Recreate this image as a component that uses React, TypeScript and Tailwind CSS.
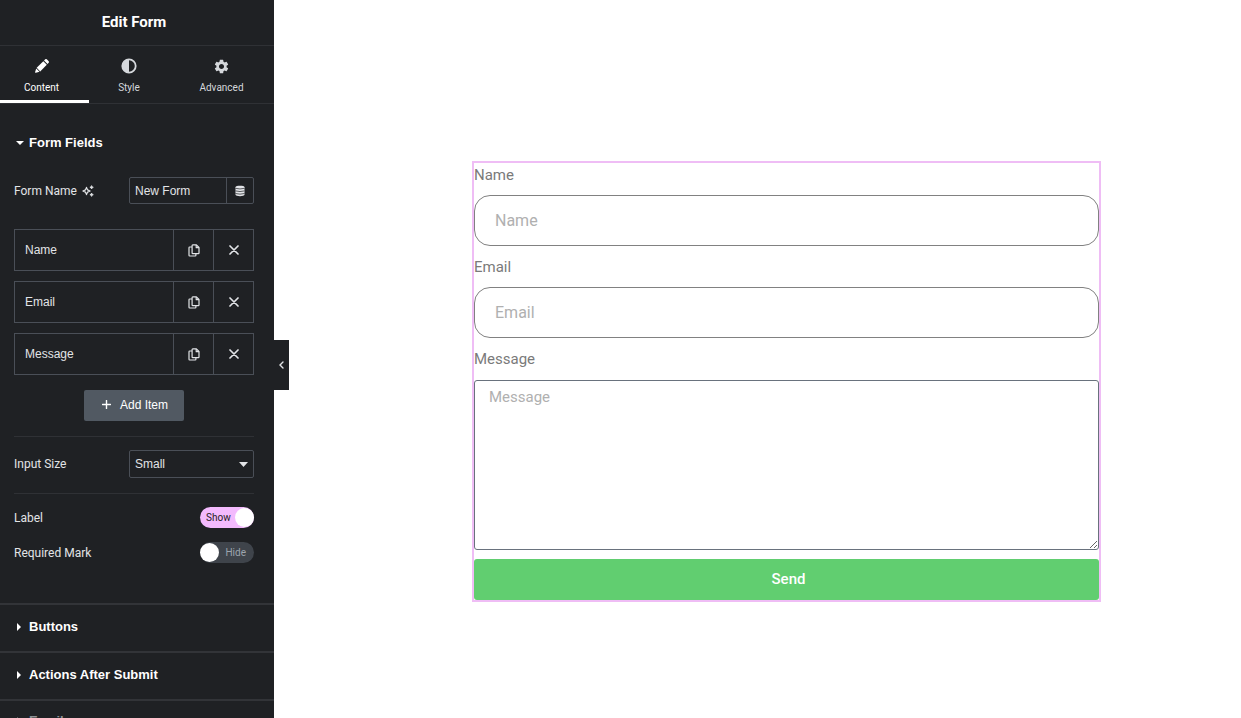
import { useState } from 'react';
import { MdSettings } from 'react-icons/md';
import clsx from 'clsx';

const tabs = [
    { id: 'content', label: 'Content', grow: 'basis-[89px] pr-1.5' },
    { id: 'style', label: 'Style', grow: 'basis-20' },
    { id: 'advanced', label: 'Advanced', grow: 'basis-[105px]' },
];

const fields = ['Name', 'Email', 'Message'];

const PencilIcon = () => (
    <svg width="16" height="16" viewBox="0 0 16 16" fill="currentColor">
        <path d="M9.3 3.2 12.8 6.7 6.2 13.4 2.7 9.8z" />
        <path d="M10 2.5 11.2 1.3Q12 .7 12.8 1.3L14.7 3.2Q15.3 4 14.7 4.8L13.5 6z" />
        <path d="M2.2 10.5 5.5 13.8 1.9 14.8Q.8 15 1.1 14z" />
    </svg>
);

const ContrastIcon = () => (
    <svg width="16" height="16" viewBox="0 0 16 16">
        <circle cx="8" cy="8" r="6.7" fill="none" stroke="currentColor" strokeWidth="1.8" />
        <path d="M8 1.3a6.7 6.7 0 0 0 0 13.4z" fill="currentColor" />
    </svg>
);

const SparkleIcon = () => (
    <svg width="12" height="12" viewBox="0 0 12 12">
        <path d="M4.5 2.4 5.6 4.9 8.1 6 5.6 7.1 4.5 9.6 3.4 7.1.9 6 3.4 4.9z" fill="none" stroke="currentColor" strokeWidth="1.2" strokeLinejoin="round" />
        <path d="M9.6.6 10.1 1.8 11.3 2.3 10.1 2.8 9.6 4 9.1 2.8 7.9 2.3 9.1 1.8zM9.6 8 10.1 9.2 11.3 9.7 10.1 10.2 9.6 11.4 9.1 10.2 7.9 9.7 9.1 9.2z" fill="currentColor" stroke="currentColor" strokeWidth="0.8" />
    </svg>
);

const DatabaseIcon = () => (
    <svg width="10" height="12" viewBox="0 0 10 12">
        <path d="M.5 2.2C.5.3 9.5.3 9.5 2.2V9.8C9.5 11.7.5 11.7.5 9.8z" fill="currentColor" />
        <path d="M.5 3.3Q5 4.6 9.5 3.3M.5 5.9Q5 7.2 9.5 5.9M.5 8.5Q5 9.8 9.5 8.5" fill="none" stroke="#1f2124" strokeWidth="0.7" />
    </svg>
);

const CopyIcon = () => (
    <svg width="12" height="13" viewBox="0 0 12 13" fill="none" stroke="currentColor" strokeWidth="1.2" strokeLinejoin="round">
        <path d="M5 .9H8.4L11 3.5V9Q11 9.7 10.3 9.7H4.8Q4.1 9.7 4.1 9V1.6Q4.1.9 4.8.9z" />
        <path d="M8.2 1V3.7H11" />
        <path d="M4 3H1.7Q1 3 1 3.7V11.3Q1 12 1.7 12H7.2Q7.9 12 7.9 11.3V9.8" />
    </svg>
);

const CloseIcon = () => (
    <svg width="10" height="10" viewBox="0 0 10 10" stroke="currentColor" strokeWidth="1.7" strokeLinecap="round">
        <path d="M1 1 9 9M9 1 1 9" />
    </svg>
);

const tabIcon = (id: string) => {
    if (id === 'content') return <PencilIcon />;
    if (id === 'style') return <ContrastIcon />;
    return <MdSettings size={17} />;
};

interface ToggleProps {
    id: string;
    label: string;
    checked: boolean;
    onChange: (value: boolean) => void;
}

const ToggleRow = ({ id, label, checked, onChange }: ToggleProps) => (
    <div className="flex items-center justify-between">
        <label htmlFor={id}>{label}</label>
        <label
            className={clsx(
                'flex h-[21px] w-[54px] cursor-pointer items-center justify-between rounded-full text-[10px]',
                checked ? 'bg-[#f3bafd] pl-1.5 text-[#1f2124]' : 'flex-row-reverse bg-[#3f444b] pr-2 text-[#9da5ae]'
            )}
        >
            <input id={id} type="checkbox" className="sr-only" checked={checked} onChange={e => onChange(e.target.checked)} />
            <span>{checked ? 'Show' : 'Hide'}</span>
            <span className="size-[19px] rounded-full bg-white" />
        </label>
    </div>
);

const Section = ({ title, className }: { title: string; className?: string }) => (
    <button
        className={clsx('flex h-12 w-full shrink-0 items-center gap-2 border-t-2 border-[#323438] pl-[17px] text-left font-["Liberation_Sans",Arial,sans-serif] text-[13px] font-bold', className)}
    >
        <svg width="4" height="8" viewBox="0 0 4 8" fill="currentColor"><path d="M0 0 4 4 0 8z" /></svg>
        {title}
    </button>
);

const Panel = () => {
    const [activeTab, setActiveTab] = useState('content');
    const [showLabel, setShowLabel] = useState(true);
    const [requiredMark, setRequiredMark] = useState(false);

    return (
        <aside className="relative w-[274px] shrink-0 bg-[#1f2124] text-xs text-[#e2e4e7]">
            <div className="flex h-full flex-col overflow-hidden">
                <header className="flex h-[46px] shrink-0 items-center justify-center border-b border-[#2f3135] pb-0.5 pr-1.5">
                    <h1 className="text-[15px] leading-5 font-bold text-white">Edit Form</h1>
                </header>

                <nav className="flex h-[58px] shrink-0 border-b border-[#2f3135]">
                    {tabs.map(tab => (
                        <button
                            key={tab.id}
                            onClick={() => setActiveTab(tab.id)}
                            className={clsx(
                                'flex grow flex-col items-center border-b-3 pt-3 text-[10px]',
                                tab.grow,
                                activeTab === tab.id ? 'border-white text-white' : 'border-transparent text-[#d5d8dc]'
                            )}
                        >
                            <span className="flex h-4 items-center">{tabIcon(tab.id)}</span>
                            <span className="mt-1.5 leading-4">{tab.label}</span>
                        </button>
                    ))}
                </nav>

                <section className="shrink-0 pr-5 pb-10 pl-3.5">
                    <button className='mt-[27px] flex h-6 items-center gap-[5px] pl-0.5 font-["Liberation_Sans",Arial,sans-serif] text-[13px] font-bold text-white'>
                        <svg width="8" height="4" viewBox="0 0 8 4" fill="currentColor"><path d="M0 0H8L4 4z" /></svg>
                        Form Fields
                    </button>

                    <div className="mt-[22px] flex items-center justify-between">
                        <label htmlFor="form-name" className="flex items-center gap-[5px]">
                            Form Name
                            <SparkleIcon />
                        </label>
                        <div className="flex h-[27px] w-[125px] rounded-xs border border-[#4a4f57]">
                            <input
                                id="form-name"
                                defaultValue="New Form"
                                className='min-w-0 flex-1 bg-transparent pl-[5px] font-["Liberation_Sans",Arial,sans-serif] outline-none'
                            />
                            <button aria-label="Dynamic tags" className="flex w-[27px] items-center justify-center border-l border-[#4a4f57]">
                                <DatabaseIcon />
                            </button>
                        </div>
                    </div>

                    <ul className='mt-[25px] flex flex-col gap-2.5 font-["Liberation_Sans",Arial,sans-serif]'>
                        {fields.map(field => (
                            <li key={field} className="flex h-[42px] border border-[#4a4f57]">
                                <button className="flex-1 pl-2.5 text-left">{field}</button>
                                <button aria-label={`Duplicate ${field}`} className="flex w-10 items-center justify-center border-l border-[#4a4f57]">
                                    <CopyIcon />
                                </button>
                                <button aria-label={`Remove ${field}`} className="flex w-10 items-center justify-center border-l border-[#4a4f57]">
                                    <CloseIcon />
                                </button>
                            </li>
                        ))}
                    </ul>

                    <button className='mx-auto mt-[15px] flex h-[31px] w-[100px] items-center justify-center gap-[9px] rounded-xs bg-[#515962] pb-0.5 pl-0.5 font-["Liberation_Sans",Arial,sans-serif] text-white'>
                        <svg width="9" height="9" viewBox="0 0 9 9" stroke="currentColor" strokeWidth="1.4" strokeLinecap="round"><path d="M4.5.5V8.5M.5 4.5H8.5" /></svg>
                        Add Item
                    </button>

                    <div className="mt-[15px] flex items-center justify-between border-y border-[#2f3135] pt-[13px] pb-[15px]">
                        <label htmlFor="input-size">Input Size</label>
                        <div className="relative">
                            <select
                                id="input-size"
                                defaultValue="Small"
                                className='h-7 w-[125px] appearance-none rounded-xs border border-[#4a4f57] bg-[#1f2124] pl-[5px] font-["Liberation_Sans",Arial,sans-serif] outline-none'
                            >
                                <option>Extra Small</option>
                                <option>Small</option>
                                <option>Medium</option>
                                <option>Large</option>
                            </select>
                            <svg className="pointer-events-none absolute top-3 right-1.5" width="9" height="5" viewBox="0 0 9 5" fill="currentColor"><path d="M0 0H9L4.5 5z" /></svg>
                        </div>
                    </div>

                    <div className="mt-[13px] flex flex-col gap-3.5">
                        <ToggleRow id="show-label" label="Label" checked={showLabel} onChange={setShowLabel} />
                        <ToggleRow id="required-mark" label="Required Mark" checked={requiredMark} onChange={setRequiredMark} />
                    </div>
                </section>

                <Section title="Buttons" className="pb-0.5 text-white" />
                <Section title="Actions After Submit" className="pb-0.5 text-white" />
                <Section title="Email" className="pb-1.5 text-[#8f9196]" />
            </div>

            {/* Collapse handle, hangs over the canvas */}
            <button aria-label="Hide panel" className="absolute top-[340px] left-full flex h-[50px] w-[15px] items-center justify-center bg-[#1f2124]">
                <svg width="5" height="8" viewBox="0 0 5 8" fill="none" stroke="currentColor" strokeWidth="1.4" strokeLinecap="round"><path d="M4 1 1 4 4 7" /></svg>
            </button>
        </aside>
    );
};

const FormPreview = () => (
    <main className="min-w-0 flex-1 pt-[161px] pr-[140px] pl-[198px]">
        <form className="flex flex-col gap-[9px] border-2 border-[#efbdf5] text-base text-[#7a7a7a]" onSubmit={e => e.preventDefault()}>
            {['Name', 'Email'].map(field => (
                <div key={field} className="flex flex-col gap-[7px]">
                    <label htmlFor={`field-${field}`} className="text-[15px] leading-[25px]">{field}</label>
                    <input
                        id={`field-${field}`}
                        type={field === 'Email' ? 'email' : 'text'}
                        placeholder={field}
                        className="h-[51px] w-full rounded-2xl border border-[#818181] px-5 outline-none placeholder:text-[#b0b0b0]"
                    />
                </div>
            ))}
            <div className="flex flex-col gap-2">
                <label htmlFor="field-message" className="text-[15px] leading-[25px]">Message</label>
                <textarea
                    id="field-message"
                    placeholder="Message"
                    className="h-[170px] w-full resize-y rounded-[3px] border border-[#69727d] px-3.5 py-1 text-[15px] leading-6 outline-none placeholder:text-[#b0b0b0]"
                />
            </div>
            <button type="submit" className="h-[41px] rounded-[3px] bg-[#61ce70] pl-1 text-[15px] font-medium text-white">
                Send
            </button>
        </form>
    </main>
);

const App = () => (
    <div className="flex h-screen overflow-hidden bg-white font-[Roboto,sans-serif]">
        <Panel />
        <FormPreview />
    </div>
);

export default App;
